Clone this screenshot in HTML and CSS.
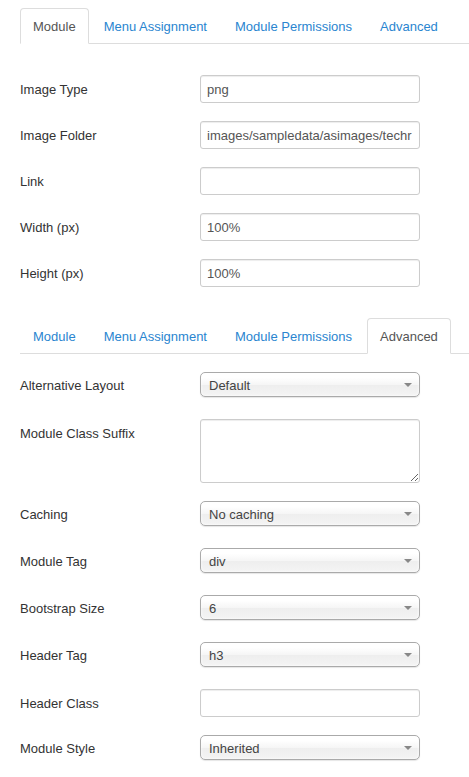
FILE: index.html
```html
<!DOCTYPE html>
<html>
<head>
<meta charset="utf-8">
<link rel="stylesheet" href="styles.css">
</head>
<body>
<div class="page">
  <ul class="tabs first">
    <li class="tab active">Module</li>
    <li class="tab">Menu Assignment</li>
    <li class="tab">Module Permissions</li>
    <li class="tab">Advanced</li>
  </ul>
  <div class="form form-basic">
    <div class="row"><label>Image Type</label><div class="input">png</div></div>
    <div class="row"><label>Image Folder</label><div class="input">images/sampledata/asimages/techr</div></div>
    <div class="row"><label>Link</label><div class="input"></div></div>
    <div class="row"><label>Width (px)</label><div class="input">100%</div></div>
    <div class="row"><label>Height (px)</label><div class="input">100%</div></div>
  </div>
  <ul class="tabs second">
    <li class="tab">Module</li>
    <li class="tab">Menu Assignment</li>
    <li class="tab">Module Permissions</li>
    <li class="tab active">Advanced</li>
  </ul>
  <div class="form form-adv">
    <div class="row srow"><label>Alternative Layout</label><div class="select">Default<span class="arrow"></span></div></div>
    <div class="row trow"><label>Module Class Suffix</label><textarea class="textarea"></textarea></div>
    <div class="row srow"><label>Caching</label><div class="select">No caching<span class="arrow"></span></div></div>
    <div class="row srow"><label>Module Tag</label><div class="select">div<span class="arrow"></span></div></div>
    <div class="row srow"><label>Bootstrap Size</label><div class="select">6<span class="arrow"></span></div></div>
    <div class="row srow"><label>Header Tag</label><div class="select">h3<span class="arrow"></span></div></div>
    <div class="row"><label>Header Class</label><div class="input"></div></div>
    <div class="row srow"><label>Module Style</label><div class="select">Inherited<span class="arrow"></span></div></div>
  </div>
</div>
</body>
</html>
```
FILE: styles.css
```css
html, body {
  margin: 0;
  padding: 0;
  background: #fff;
}
body {
  font-family: "Liberation Sans", Arial, sans-serif;
  font-size: 13px;
  line-height: 18px;
  color: #333;
}
.page {
  padding-left: 20px;
  padding-top: 8px;
}
.tabs {
  list-style: none;
  margin: 0;
  padding: 0;
  display: flex;
  border-bottom: 1px solid #ddd;
}
.tabs.second {
  margin-top: 13px;
}
.tab {
  padding: 9px 12px 7px;
  line-height: 18px;
  margin-right: 2px;
  margin-bottom: -1px;
  border: 1px solid transparent;
  border-radius: 4px 4px 0 0;
  color: #2a85d0;
  white-space: nowrap;
}
.tab.active {
  color: #555;
  background: #fff;
  border-color: #ddd #ddd transparent;
}
.form {
  display: flex;
  flex-direction: column;
}
.form-basic {
  padding-top: 31px;
}
.form-adv {
  padding-top: 18px;
}
.row {
  display: flex;
  align-items: flex-start;
  height: 28px;
  margin-bottom: 18px;
}
.row.srow {
  height: 29px;
}
.row.trow {
  height: 64px;
}
.row label {
  width: 180px;
  padding-top: 6px;
  flex: none;
}
.row.srow label {
  padding-top: 5px;
}
.input {
  box-sizing: border-box;
  width: 220px;
  height: 28px;
  padding: 5px 6px 3px;
  border: 1px solid #ccc;
  border-radius: 3px;
  box-shadow: inset 0 1px 1px rgba(0,0,0,0.075);
  color: #555;
  white-space: nowrap;
  overflow: hidden;
}
.textarea {
  box-sizing: border-box;
  width: 220px;
  height: 64px;
  margin: 0;
  padding: 4px 6px;
  border: 1px solid #ccc;
  border-radius: 3px;
  box-shadow: inset 0 1px 1px rgba(0,0,0,0.075);
  font: inherit;
  resize: both;
}
.select {
  position: relative;
  box-sizing: border-box;
  width: 220px;
  height: 25px;
  padding: 1px 0 0 8px;
  line-height: 23px;
  border: 1px solid #aaa;
  border-radius: 5px;
  background: linear-gradient(#fff 20%, #f6f6f6 50%, #eee 52%, #f4f4f4 100%);
  box-shadow: inset 0 0 3px #fff, 0 1px 1px rgba(0,0,0,0.1);
  color: #444;
}
.arrow {
  position: absolute;
  right: 7px;
  top: 10px;
  width: 0;
  height: 0;
  border-left: 4px solid transparent;
  border-right: 4px solid transparent;
  border-top: 4px solid #888;
}
```
